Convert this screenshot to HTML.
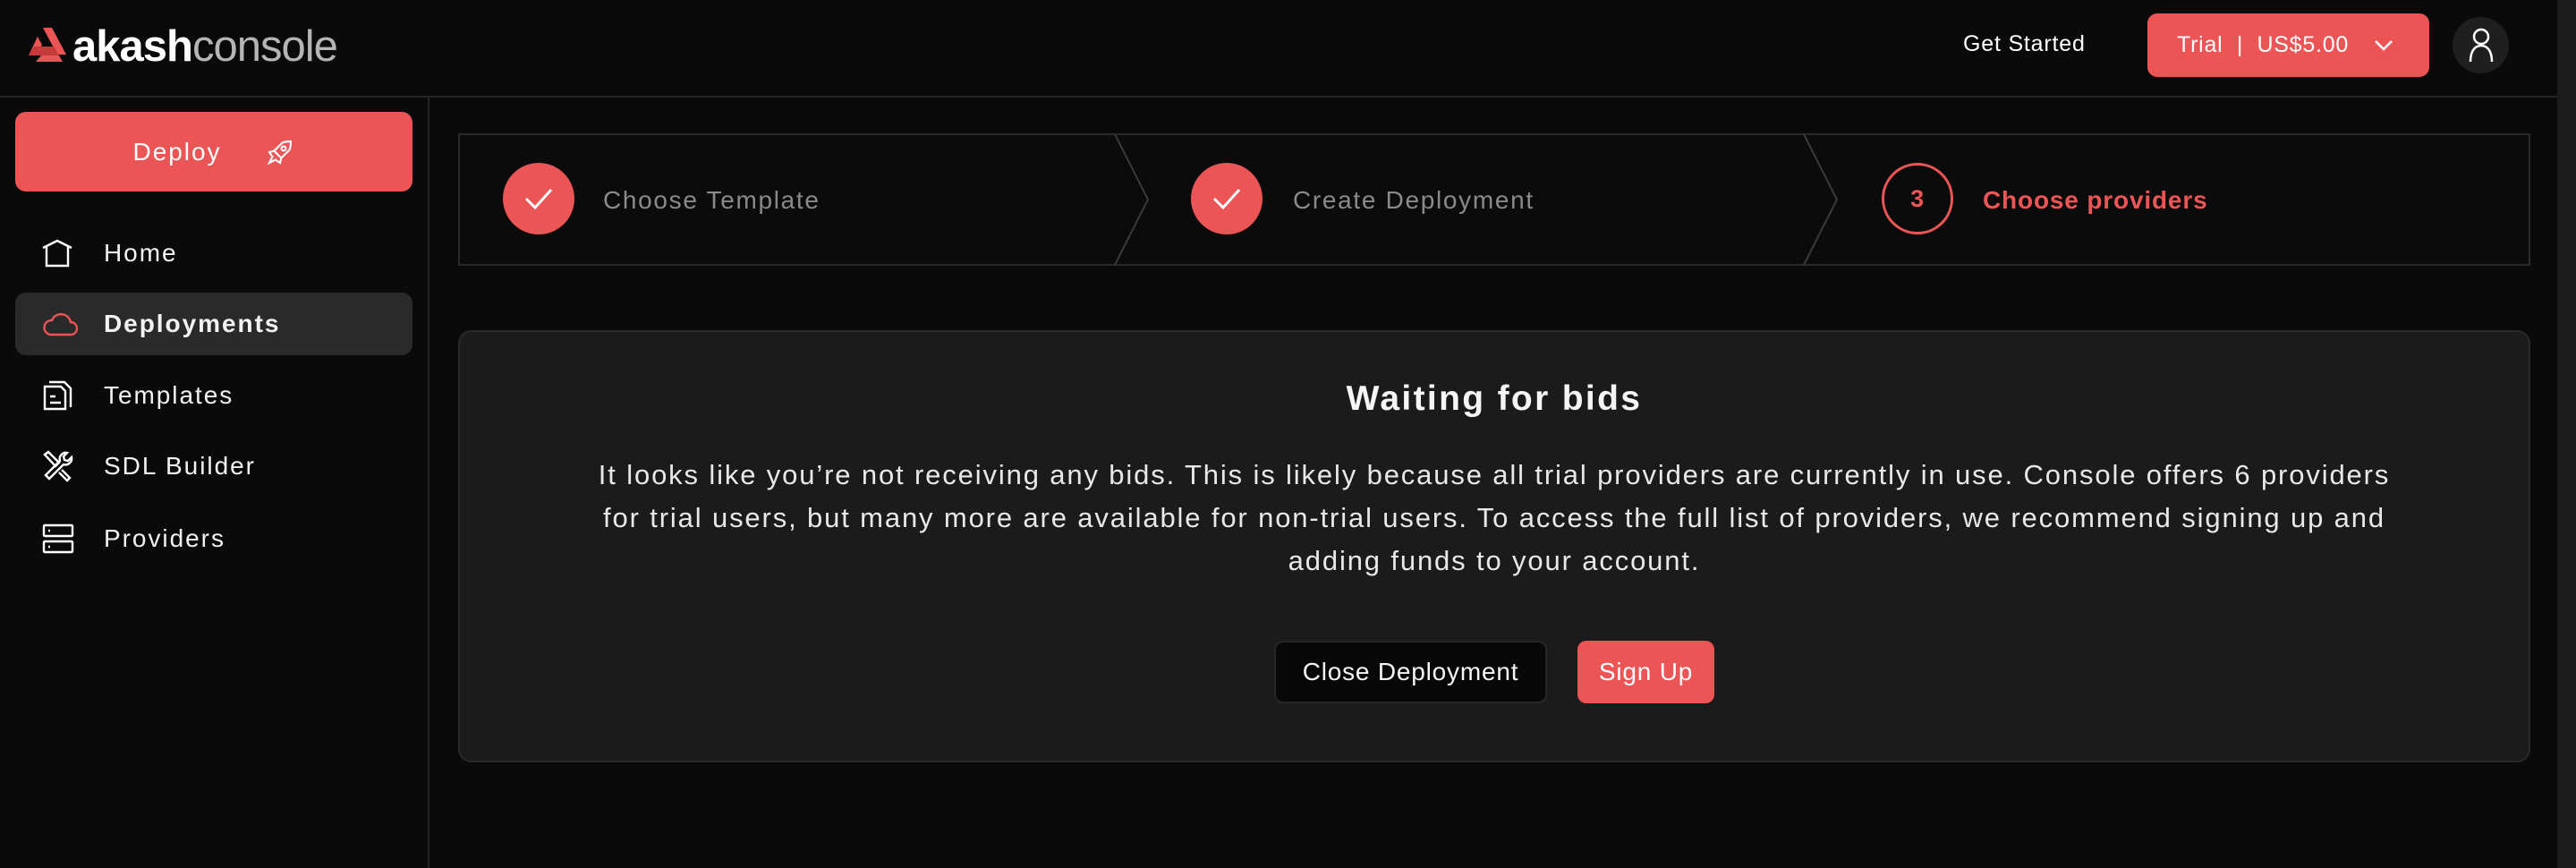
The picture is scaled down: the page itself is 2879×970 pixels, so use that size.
<!DOCTYPE html>
<html><head><meta charset="utf-8"><style>
*{box-sizing:border-box;margin:0;padding:0}
body{width:2879px;height:970px;background:#0a0a0a;font-family:"Liberation Sans",sans-serif;color:#fff;position:relative;overflow:hidden;letter-spacing:0.05em}
.abs{position:absolute}
.red{background:#eb5555}
.nav{position:absolute;left:17px;width:444px;height:70px;display:flex;align-items:center;font-size:28px;color:#f2f2f2;letter-spacing:0.07em}
.nav svg{position:absolute;left:30px}
.nav span{position:absolute;left:99px}
.step{position:absolute;top:182px;width:80px;height:80px;border-radius:50%;display:flex;align-items:center;justify-content:center}
.stxt{position:absolute;top:224px;transform:translateY(-50%);font-size:28px;color:#8a8a8a;letter-spacing:0.06em}
</style></head><body>
<div class="abs" style="left:0;top:107px;width:2858px;height:2px;background:#242424"></div>
<svg class="abs" style="left:32px;top:31px" width="42" height="38" viewBox="0 0 42 38">
<path d="M16 0h10l16 30h-10z" fill="#eb5555"/><path d="M10 10l5 9-7 12 -8-0z" fill="#eb5555"/><path d="M0 31l6-10 22 0 6 10h-26z" fill="#c43b3b"/><path d="M8 38l6-7h20l4 7z" fill="#eb5555"/>
</svg>
<div class="abs" style="left:81px;top:22px;font-size:49px;letter-spacing:-1px;line-height:60px"><b style="color:#fff">akash</b><span style="color:#b5b5b5">console</span></div>
<div class="abs" style="left:2194px;top:35px;font-size:25px;color:#fff">Get Started</div>
<div class="abs red" style="left:2400px;top:15px;width:315px;height:71px;border-radius:11px;font-size:25px;color:#fff;display:flex;align-items:center;padding-left:33px;letter-spacing:0.03em">Trial&nbsp;&nbsp;|&nbsp;&nbsp;US$5.00
<svg style="margin-left:28px" width="22" height="14" viewBox="0 0 22 14"><path d="M2 2l9 9 9-9" stroke="#fff" stroke-width="2.5" fill="none"/></svg></div>
<div class="abs" style="left:2741px;top:19px;width:63px;height:63px;border-radius:50%;background:#1f1f1f"></div>
<svg class="abs" style="left:2758px;top:30px" width="30" height="40" viewBox="0 0 30 40"><circle cx="15" cy="11" r="8" stroke="#fff" stroke-width="2.5" fill="none"/><path d="M3 39c0-12 5-18 12-18s12 6 12 18" stroke="#fff" stroke-width="2.5" fill="none"/></svg>
<div class="abs" style="left:2858px;top:0;width:21px;height:970px;background:#1c1c1c"></div>
<div class="abs" style="left:478px;top:109px;width:2px;height:861px;background:#242424"></div>
<div class="abs red" style="left:17px;top:125px;width:444px;height:89px;border-radius:12px;display:flex;align-items:center;justify-content:center;font-size:28px;color:#fff;letter-spacing:0.07em">Deploy
<svg style="margin-left:50px" width="32" height="32" viewBox="0 0 24 24" fill="none" stroke="#fff" stroke-width="1.6"><path d="M14 4c3-1 6-1 7-1 0 1 0 4-1 7l-7 7-6-6z"/><circle cx="15" cy="9" r="1.8"/><path d="M7 11l-4 1 2 3M13 17l-1 4-3-2M6 15l-3 6 6-3"/></svg></div>
<div class="nav" style="top:248px"><svg width="34" height="32" viewBox="0 0 34 32" fill="none" stroke="#fff" stroke-width="2.4"><path d="M1 10L17 2l16 8M5 9v21h24V9"/></svg><span>Home</span></div>
<div class="nav" style="top:327px;background:#2a2a2a;border-radius:12px"><svg width="40" height="28" viewBox="0 0 40 28" fill="none" stroke="#eb5555" stroke-width="2.4"><path d="M10 26h22a7 7 0 0 0 0-14 11 11 0 0 0-21-2A8 8 0 0 0 10 26z"/></svg><span style="font-weight:bold">Deployments</span></div>
<div class="nav" style="top:407px"><svg width="34" height="34" viewBox="0 0 34 34" fill="none" stroke="#fff" stroke-width="2.4"><path d="M3 7h18l5 5v20H3zM8 2h17l7 7v21M9 18h6M9 25h12"/></svg><span>Templates</span></div>
<div class="nav" style="top:486px"><svg width="36" height="36" viewBox="0 0 36 36" fill="none" stroke="#fff" stroke-width="2.4"><path d="M3 5l4-3 12 12-4 4zM28 3a7 7 0 0 0-8 9L4 28l4 4 16-16a7 7 0 0 0 9-8l-4 4-4-1-1-4zM22 22l9 9-3 3-9-9"/></svg><span>SDL Builder</span></div>
<div class="nav" style="top:567px"><svg width="36" height="34" viewBox="0 0 36 34" fill="none" stroke="#fff" stroke-width="2.4"><rect x="2" y="2" width="32" height="12" rx="1"/><rect x="2" y="20" width="32" height="12" rx="1"/><path d="M7 8h2M7 26h2"/></svg><span>Providers</span></div>
<svg class="abs" style="left:512px;top:149px" width="2316" height="148" viewBox="0 0 2316 148">
<rect x="1" y="1" width="2314" height="146" fill="#0b0b0b" stroke="#2a2a2a" stroke-width="2"/>
<path d="M734 1l37 73-37 73M1504 1l37 73-37 73" stroke="#3a3a3a" stroke-width="2" fill="none"/>
</svg>
<div class="step red" style="left:562px"><svg width="34" height="26" viewBox="0 0 34 26"><path d="M3 13l10 10L31 3" stroke="#fff" stroke-width="3" fill="none"/></svg></div>
<div class="stxt" style="left:674px">Choose Template</div>
<div class="step red" style="left:1331px"><svg width="34" height="26" viewBox="0 0 34 26"><path d="M3 13l10 10L31 3" stroke="#fff" stroke-width="3" fill="none"/></svg></div>
<div class="stxt" style="left:1445px">Create Deployment</div>
<div class="step" style="left:2103px;border:3px solid #eb5555;color:#eb5555;font-size:27px;font-weight:bold">3</div>
<div class="stxt" style="left:2216px;color:#eb5555;font-weight:bold;letter-spacing:0.03em">Choose providers</div>
<div class="abs" style="left:512px;top:369px;width:2316px;height:483px;background:#1b1b1b;border:2px solid #2a2a2a;border-radius:15px"></div>
<div class="abs" style="left:512px;width:2316px;top:424px;text-align:center;font-size:39px;font-weight:bold;color:#f5f5f5;letter-spacing:0.06em">Waiting for bids</div>
<div class="abs" style="left:512px;width:2316px;top:507px;text-align:center;font-size:31px;line-height:48px;color:#e8e8e8;letter-spacing:0.06em">It looks like you’re not receiving any bids. This is likely because all trial providers are currently in use. Console offers 6 providers<br>for trial users, but many more are available for non-trial users. To access the full list of providers, we recommend signing up and<br>adding funds to your account.</div>
<div class="abs" style="left:1424px;top:716px;width:305px;height:70px;background:#080808;border:2px solid #262626;border-radius:10px;display:flex;align-items:center;justify-content:center;font-size:28px;color:#f5f5f5">Close Deployment</div>
<div class="abs red" style="left:1763px;top:716px;width:153px;height:70px;border-radius:10px;display:flex;align-items:center;justify-content:center;font-size:28px;color:#fff">Sign Up</div>
</body></html>
